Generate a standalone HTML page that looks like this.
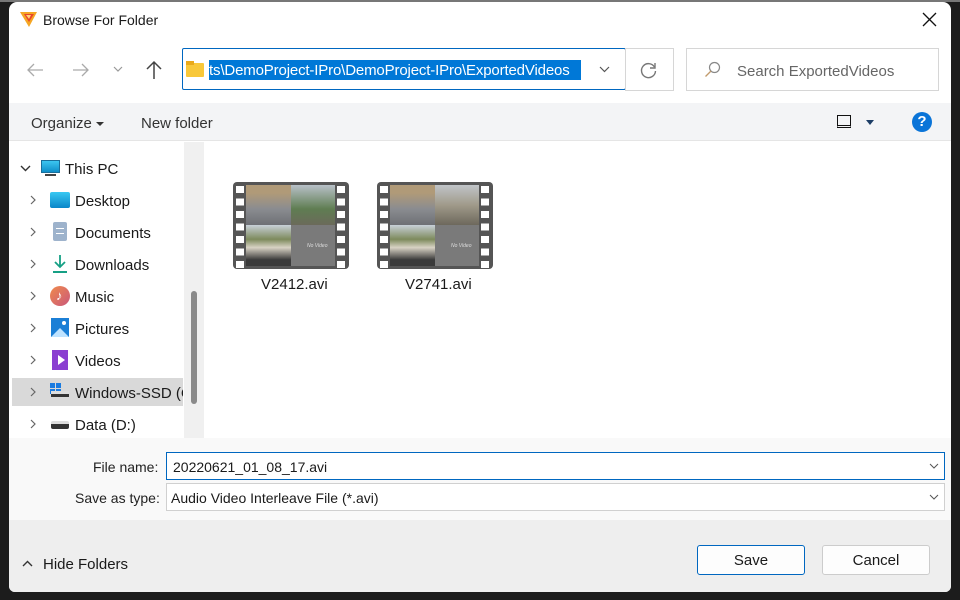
<!DOCTYPE html>
<html><head><meta charset="utf-8">
<style>
*{margin:0;padding:0;box-sizing:border-box}
body{width:960px;height:600px;background:#1c1c1c;font-family:"Liberation Sans",sans-serif;position:relative;overflow:hidden;color:#1a1a1a}
.a{position:absolute}
.win{left:9px;top:2px;width:942px;height:590px;background:#fff;border-radius:8px 8px 6px 6px;overflow:hidden}
.t{font-size:14px;white-space:nowrap}
.box{border:1px solid #d6d6d6;background:#fff}
.film{width:116px;height:87px;background:#555;border-radius:4px}
</style></head><body>
<div class="a" style="left:0;top:0;width:960px;height:2px;background:#777"></div>
<div class="a win"></div>
<!-- title -->
<svg class="a" style="left:19px;top:10px" width="19" height="18" viewBox="0 0 19 18"><path d="M1 2 L18 2 L10 17 Z" fill="#f5a623"/><path d="M5 4 L15 4 L10 12 Z" fill="#e8452c"/><path d="M7 5 L12 5 L10 9Z" fill="#ffd27a"/></svg>
<div class="a t" style="left:43px;top:12px;font-size:14px">Browse For Folder</div>
<svg class="a" style="left:922px;top:12px" width="15" height="15" viewBox="0 0 15 15"><path d="M1 1L14 14M14 1L1 14" stroke="#111" stroke-width="1.3"/></svg>
<!-- nav -->
<svg class="a" style="left:26px;top:62px" width="18" height="16" viewBox="0 0 18 16"><path d="M17 8H2M8 2L2 8L8 14" stroke="#aaa" stroke-width="1.3" fill="none"/></svg>
<svg class="a" style="left:72px;top:62px" width="18" height="16" viewBox="0 0 18 16"><path d="M1 8H16M10 2L16 8L10 14" stroke="#aaa" stroke-width="1.3" fill="none"/></svg>
<svg class="a" style="left:113px;top:66px" width="10" height="6" viewBox="0 0 10 6"><path d="M1 1L5 5L9 1" stroke="#999" stroke-width="1.2" fill="none"/></svg>
<svg class="a" style="left:145px;top:60px" width="18" height="20" viewBox="0 0 18 20"><path d="M9 19V2M2 9L9 2L16 9" stroke="#444" stroke-width="1.5" fill="none"/></svg>
<div class="a" style="left:182px;top:48px;width:444px;height:42px;border:1px solid #0067c0;border-radius:2px;background:#fff"></div>
<div class="a" style="left:186px;top:63px;width:18px;height:14px;background:#f8c83a;border-radius:1px"></div>
<div class="a" style="left:186px;top:61px;width:8px;height:4px;background:#e9a91a"></div>
<div class="a t" style="left:209px;top:60px;height:20px;width:372px;background:#0078d7;color:#fff;font-size:15px;line-height:21px;overflow:hidden;letter-spacing:-0.15px">ts\DemoProject-IPro\DemoProject-IPro\ExportedVideos</div>
<svg class="a" style="left:599px;top:66px" width="11" height="7" viewBox="0 0 11 7"><path d="M1 1L5.5 5.5L10 1" stroke="#555" stroke-width="1.2" fill="none"/></svg>
<div class="a box" style="left:625px;top:48px;width:49px;height:43px"></div>
<svg class="a" style="left:639px;top:61px" width="19" height="19" viewBox="0 0 19 19"><path d="M15.5 6A7 7 0 1 0 16.5 10" stroke="#777" stroke-width="1.4" fill="none"/><path d="M16 2V7H11" stroke="#777" stroke-width="1.4" fill="none"/></svg>
<div class="a box" style="left:686px;top:48px;width:253px;height:43px"></div>
<svg class="a" style="left:704px;top:61px" width="17" height="17" viewBox="0 0 17 17"><circle cx="10.5" cy="6.5" r="5" stroke="#888" stroke-width="1.2" fill="none"/><path d="M7 10L1.5 15.5" stroke="#c19a6b" stroke-width="1.3"/></svg>
<div class="a t" style="left:737px;top:63px;font-size:15px;color:#666">Search ExportedVideos</div>
<!-- toolbar -->
<div class="a" style="left:9px;top:103px;width:942px;height:38px;background:#f3f4f6;border-bottom:1px solid #e5e5e5"></div>
<div class="a t" style="left:31px;top:115px;font-size:15px;color:#333">Organize</div>
<div class="a" style="left:96px;top:122px;border:4px solid transparent;border-top:4px solid #333;border-bottom:0"></div>
<div class="a t" style="left:141px;top:115px;font-size:15px;color:#333">New folder</div>
<div class="a" style="left:837px;top:115px;width:14px;height:13px;border:1.5px solid #111;border-bottom:3px double #111"></div>
<div class="a" style="left:866px;top:120px;border:4.5px solid transparent;border-top:5px solid #1c3d66;border-bottom:0"></div>
<div class="a" style="left:912px;top:112px;width:20px;height:20px;border-radius:50%;background:#0a74d8;color:#fff;font-size:15px;font-weight:bold;text-align:center;line-height:20px">?</div>
<!-- nav pane -->
<div class="a" style="left:184px;top:142px;width:20px;height:296px;background:#f0f0f0"></div>
<div class="a" style="left:191px;top:291px;width:6px;height:113px;background:#8a8a8a;border-radius:3px"></div>
<div class="a" style="left:12px;top:378px;width:171px;height:28px;background:#d9d9d9"></div>
<svg class="a" style="left:20px;top:165px" width="11" height="7" viewBox="0 0 11 7"><path d="M1 1L5.5 5.5L10 1" stroke="#333" stroke-width="1.4" fill="none"/></svg>
<div class="a" style="left:41px;top:160px;width:19px;height:13px;background:linear-gradient(#3cc6f0,#0f8fc9);border:1px solid #1a6e9a"></div>
<div class="a" style="left:45px;top:174px;width:11px;height:2px;background:#444"></div>
<div class="a t" style="left:65px;top:161px;font-size:15px">This PC</div>
<div class="a" style="left:28px;top:184px;width:10px;height:256px">
<svg width="10" height="256" viewBox="0 0 10 256"><g stroke="#666" stroke-width="1.2" fill="none"><path d="M3 12L7 16L3 20"/><path d="M3 44L7 48L3 52"/><path d="M3 76L7 80L3 84"/><path d="M3 108L7 112L3 116"/><path d="M3 140L7 144L3 148"/><path d="M3 172L7 176L3 180"/><path d="M3 204L7 208L3 212"/><path d="M3 236L7 240L3 244"/></g></svg></div>
<div class="a" style="left:50px;top:192px;width:20px;height:16px;background:linear-gradient(#38c8f2,#0a86c8);border-radius:2px"></div>
<div class="a" style="left:53px;top:222px;width:14px;height:19px;background:#9eb3cc;border-radius:2px"></div>
<div class="a" style="left:56px;top:228px;width:8px;height:6px;border-top:1px solid #fff;border-bottom:1px solid #fff"></div>
<svg class="a" style="left:52px;top:254px" width="16" height="20" viewBox="0 0 16 20"><path d="M8 1V13M3 8L8 13L13 8" stroke="#16a085" stroke-width="1.8" fill="none"/><path d="M1 18H15" stroke="#16a085" stroke-width="2"/></svg>
<div class="a" style="left:50px;top:286px;width:20px;height:20px;border-radius:50%;background:linear-gradient(135deg,#f08a4b,#c9587c)"></div>
<div class="a t" style="left:56px;top:288px;color:#fff;font-size:13px">♪</div>
<svg class="a" style="left:51px;top:318px" width="18" height="19" viewBox="0 0 18 19"><rect width="18" height="19" fill="#1b7fd6"/><path d="M0 19L9 10L18 19Z" fill="#bfe3ff"/><circle cx="13" cy="5" r="2" fill="#fff"/></svg>
<div class="a" style="left:52px;top:350px;width:16px;height:20px;background:#8b3fd1"></div>
<div class="a" style="left:58px;top:355px;border:5px solid transparent;border-left:7px solid #fff;border-right:0"></div>
<div class="a" style="left:50px;top:383px;width:5px;height:5px;background:#1a7be0;box-shadow:6px 0 #1a7be0,0 6px #1a7be0,6px 6px #1a7be0"></div>
<div class="a" style="left:51px;top:391px;width:18px;height:6px;background:#333;border-top:3px solid #ddd"></div>
<div class="a" style="left:51px;top:421px;width:18px;height:8px;background:#333;border-top:3px solid #ddd;border-radius:2px"></div>
<div class="a t" style="left:75px;top:193px;font-size:15px">Desktop</div>
<div class="a t" style="left:75px;top:225px;font-size:15px">Documents</div>
<div class="a t" style="left:75px;top:257px;font-size:15px">Downloads</div>
<div class="a t" style="left:75px;top:289px;font-size:15px">Music</div>
<div class="a t" style="left:75px;top:321px;font-size:15px">Pictures</div>
<div class="a t" style="left:75px;top:353px;font-size:15px">Videos</div>
<div class="a t" style="left:75px;top:385px;font-size:15px;width:108px;overflow:hidden">Windows-SSD (C:)</div>
<div class="a t" style="left:75px;top:417px;font-size:15px">Data (D:)</div>
<!-- thumbnails -->
<div class="a film" style="left:233px;top:182px"></div>
<div class="a film" style="left:377px;top:182px"></div>
<div class="a" style="left:246px;top:185px;width:45px;height:40px;background:linear-gradient(#b09a78 20%,#8a8c90 60%,#6e7075)"></div>
<div class="a" style="left:291px;top:185px;width:44px;height:40px;background:linear-gradient(#b8c0c8,#5f7d52 60%,#6b6a5a)"></div>
<div class="a" style="left:246px;top:225px;width:45px;height:41px;background:linear-gradient(#c8d0d8,#7d8a5c 35%,#d8d2c4 55%,#3a3a3a 85%)"></div>
<div class="a" style="left:291px;top:225px;width:44px;height:41px;background:#7a7a7a"></div>
<div class="a" style="left:390px;top:185px;width:45px;height:40px;background:linear-gradient(#b09a78 20%,#8a8c90 60%,#6e7075)"></div>
<div class="a" style="left:435px;top:185px;width:44px;height:40px;background:linear-gradient(#c0c4c8,#a09a8a 50%,#6d685c)"></div>
<div class="a" style="left:390px;top:225px;width:45px;height:41px;background:linear-gradient(#c8d0d8,#7d8a5c 35%,#d8d2c4 55%,#3a3a3a 85%)"></div>
<div class="a" style="left:435px;top:225px;width:44px;height:41px;background:#7a7a7a"></div>
<div class="a" style="left:307px;top:243px;font-size:5px;color:#ddd;font-style:italic">No Video</div>
<div class="a" style="left:451px;top:243px;font-size:5px;color:#ddd;font-style:italic">No Video</div>
<div class="a" style="left:236px;top:186px;width:8px;height:82px;background:repeating-linear-gradient(#fff 0 7px,#555 7px 12.5px)"></div>
<div class="a" style="left:337px;top:186px;width:8px;height:82px;background:repeating-linear-gradient(#fff 0 7px,#555 7px 12.5px)"></div>
<div class="a" style="left:380px;top:186px;width:8px;height:82px;background:repeating-linear-gradient(#fff 0 7px,#555 7px 12.5px)"></div>
<div class="a" style="left:481px;top:186px;width:8px;height:82px;background:repeating-linear-gradient(#fff 0 7px,#555 7px 12.5px)"></div>
<div class="a t" style="left:261px;top:276px;font-size:15px">V2412.avi</div>
<div class="a t" style="left:405px;top:276px;font-size:15px">V2741.avi</div>
<!-- bottom -->
<div class="a" style="left:9px;top:438px;width:942px;height:82px;background:#f9f9f9"></div>
<div class="a" style="left:9px;top:520px;width:942px;height:72px;background:#eeeeee;border-radius:0 0 6px 6px"></div>
<div class="a t" style="left:93px;top:459px;font-size:14px;color:#222">File name:</div>
<div class="a t" style="left:75px;top:490px;font-size:14px;color:#222">Save as type:</div>
<div class="a" style="left:166px;top:452px;width:779px;height:28px;border:1px solid #0067c0;background:#fff"></div>
<div class="a t" style="left:173px;top:459px;font-size:14px">20220621_01_08_17.avi</div>
<div class="a" style="left:166px;top:483px;width:779px;height:28px;border:1px solid #d0d0d0;background:#fff"></div>
<div class="a t" style="left:171px;top:490px;font-size:14px">Audio Video Interleave File (*.avi)</div>
<svg class="a" style="left:929px;top:463px" width="10" height="6" viewBox="0 0 10 6"><path d="M1 1L5 5L9 1" stroke="#555" fill="none"/></svg>
<svg class="a" style="left:929px;top:494px" width="10" height="6" viewBox="0 0 10 6"><path d="M1 1L5 5L9 1" stroke="#555" fill="none"/></svg>
<svg class="a" style="left:22px;top:560px" width="11" height="7" viewBox="0 0 11 7"><path d="M1 6L5.5 1.5L10 6" stroke="#333" stroke-width="1.4" fill="none"/></svg>
<div class="a t" style="left:43px;top:556px;font-size:15px">Hide Folders</div>
<div class="a" style="left:697px;top:545px;width:108px;height:30px;border:1px solid #0067c0;border-radius:3px;background:#fdfdfd;text-align:center;line-height:29px;font-size:15px">Save</div>
<div class="a" style="left:822px;top:545px;width:108px;height:30px;border:1px solid #ccc;border-radius:3px;background:#fdfdfd;text-align:center;line-height:29px;font-size:15px">Cancel</div>
</body></html>
